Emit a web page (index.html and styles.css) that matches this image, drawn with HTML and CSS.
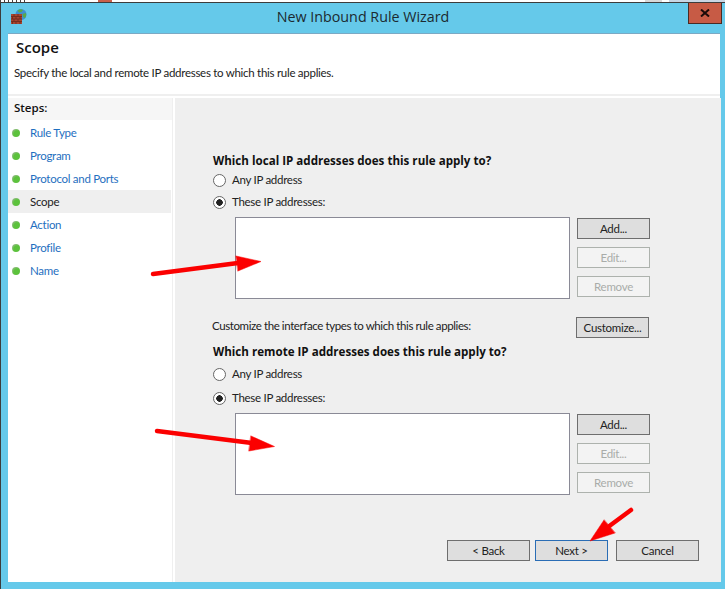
FILE: index.html
```html
<!DOCTYPE html>
<html lang="en">
<head>
<meta charset="utf-8">
<title>New Inbound Rule Wizard</title>
<link rel="stylesheet" href="styles.css">
</head>
<body>
<div class="strip"><span class="strip-text"></span><span class="strip-red"></span><span class="strip-grey"></span><span class="strip-blue"></span></div>
<div class="window">
  <div class="titlebar">
    <svg class="appicon" width="16" height="15" viewBox="0 0 16 15">
      <circle cx="10" cy="5.500" r="5.500" fill="#3f8fd0"/>
      <path d="M6.500 1.500c2-1.500 4-1.500 5.500-.5l-1.500 2-2.500.5zM11.500 5l3.500-1c.5 2 0 4-1 5l-2-1z" fill="#58a94a"/>
      <rect x="0" y="5" width="11" height="10" fill="#a8452f"/>
      <path d="M0 7.500h11M0 10h11M0 12.500h11M3 5v2.500M7 5v2.500M1.500 7.500V10M5 7.500V10M9 7.500V10M3 10v2.500M7 10v2.500M1.500 12.500V15M5 12.500V15M9 12.500V15" stroke="#6d2a1c" stroke-width=".8" fill="none"/>
    </svg>
    <div class="title">New Inbound Rule Wizard</div>
    <div class="close"><svg width="10" height="8" viewBox="0 0 10 8"><path d="M1 0.500L9 7.500M9 0.500L1 7.500" stroke="#1a0a08" stroke-width="2"/></svg></div>
  </div>
  <div class="content">
    <header class="head">
      <h1>Scope</h1>
      <p>Specify the local and remote IP addresses to which this rule applies.</p>
    </header>
    <div class="body">
      <nav class="side">
        <div class="steps-title">Steps:</div>
        <ul class="steps">
          <li class="step"><i class="dot"></i>Rule Type</li>
          <li class="step"><i class="dot"></i>Program</li>
          <li class="step"><i class="dot"></i>Protocol and Ports</li>
          <li class="step current"><i class="dot"></i>Scope</li>
          <li class="step"><i class="dot"></i>Action</li>
          <li class="step"><i class="dot"></i>Profile</li>
          <li class="step"><i class="dot"></i>Name</li>
        </ul>
      </nav>
      <main class="main">
        <section class="group first">
          <h2>Which local IP addresses does this rule apply to?</h2>
          <div class="radio r1"><i class="rb"></i>Any IP address</div>
          <div class="radio r2"><i class="rb on"></i>These IP addresses:</div>
          <div class="listrow">
            <div class="list"></div>
            <div class="btns">
              <div class="btn">Add...</div>
              <div class="btn off">Edit...</div>
              <div class="btn off">Remove</div>
            </div>
          </div>
        </section>
        <div class="custom">
          <span class="custom-label">Customize the interface types to which this rule applies:</span>
          <div class="btn">Customize...</div>
        </div>
        <section class="group second">
          <h2>Which remote IP addresses does this rule apply to?</h2>
          <div class="radio r1"><i class="rb"></i>Any IP address</div>
          <div class="radio r2"><i class="rb on"></i>These IP addresses:</div>
          <div class="listrow">
            <div class="list"></div>
            <div class="btns">
              <div class="btn">Add...</div>
              <div class="btn off">Edit...</div>
              <div class="btn off">Remove</div>
            </div>
          </div>
        </section>
        <footer class="foot">
          <div class="btn wide">&lt; Back</div>
          <div class="btn next">Next &gt;</div>
          <div class="btn wide">Cancel</div>
        </footer>
      </main>
    </div>
  </div>
</div>
<svg class="arrows" width="725" height="589" viewBox="0 0 725 589">
  <g fill="#fb0000" stroke="#fb0000" stroke-linecap="round">
    <path d="M153 274L238 263" stroke-width="4.500" fill="none"/>
    <path d="M236 256L261 261.500L238 271Z" stroke-width=".5"/>
    <path d="M157 431L252 443" stroke-width="4.500" fill="none"/>
    <path d="M251 436L274.500 446.500L249 451Z" stroke-width=".5"/>
    <path d="M631 510L608 527" stroke-width="4.500" fill="none"/>
    <path d="M604 520L590 541L615 533Z" stroke-width=".5"/>
  </g>
</svg>
</body>
</html>
```

FILE: styles.css
```css
* { box-sizing: border-box; }
html, body { margin: 0; padding: 0; }
body {
  width: 725px;
  height: 589px;
  overflow: hidden;
  position: relative;
  background: #65c9ea;
  font-family: Lato, Roboto, sans-serif;
  font-size: 11.500px;
  letter-spacing: -0.28px;
  color: #222;
}
.strip {
  height: 2px;
  background: #fff;
  display: flex;
}
.strip-text {
  width: 26px;
  margin-right: 72px;
  background: repeating-linear-gradient(90deg, #444 0 1px, #fff 1px 4px);
}
.strip-red { width: 14px; background: #c9604c; margin-right: 533px; }
.strip-grey { width: 17px; background: #d8d8d8; margin-right: 7px; }
.strip-blue { width: 56px; background: #c9d6e4; }
.window {
  height: 587px;
  border-top: 1px solid #3c3c3c;
  border-left: 1px solid #3c3c3c;
  display: flex;
  flex-direction: column;
}
.titlebar {
  height: 30px;
  flex: none;
  display: grid;
  grid-template-columns: 1fr auto 1fr;
  align-items: start;
  padding-left: 10px;
  padding-right: 3px;
}
.appicon { margin-top: 6px; }
.title {
  font-family: "Open Sans", sans-serif;
  font-size: 14.300px;
  letter-spacing: normal;
  line-height: 28px;
  color: #1c2a30;
  margin-right: 7px;
}
.close {
  justify-self: end;
  width: 34px;
  height: 21px;
  background: #c75b45;
  border: 1px solid #4a2a22;
  border-top: 0;
  display: flex;
  align-items: center;
  justify-content: center;
}
.content {
  flex: 1;
  margin: 0 5px 7px 7px;
  display: flex;
  flex-direction: column;
  background: #fff;
  border-top: 1px solid #7ba9c4;
}
.head {
  flex: none;
  padding-left: 6px;
  border-bottom: 2px solid #efefef;
  height: 62px;
}
h1 {
  margin: 0;
  padding: 3px 0 0 2px;
  font-family: "Open Sans", sans-serif;
  font-size: 15px;
  letter-spacing: normal;
  font-weight: 600;
  line-height: 20px;
  color: #111;
}
.head p {
  margin: 0;
  padding-top: 7px;
  line-height: 18px;
}
.body {
  flex: 1;
  display: flex;
  padding-top: 2px;
  min-height: 0;
  background: #fff;
}
.side {
  width: 165px;
  margin-right: 2px;
  flex: none;
  border-right: 1px solid #efefef;
}
.steps-title {
  height: 22px;
  padding-left: 6px;
  line-height: 20px;
  font-family: "Open Sans", sans-serif;
  font-weight: 600;
  letter-spacing: normal;
  color: #111;
  background: #f6f6f6;
}
.steps {
  list-style: none;
  margin: 1px 0 0;
  padding: 0;
}
.step {
  height: 23px;
  padding-left: 4px;
  display: flex;
  align-items: center;
  line-height: 23px;
  color: #1f6fc0;
}
.step.current { background: #efefef; color: #222; margin-right: 1px; }
.dot {
  width: 8px;
  height: 8px;
  margin-right: 10px;
  border-radius: 50%;
  background: radial-gradient(circle at 65% 65%, #5cc23c 45%, #a8b8a0 90%);
}
.main {
  flex: 1;
  background: #efefef;
  padding: 0 71px 21px 37px;
  display: flex;
  flex-direction: column;
}
.group.first { margin-top: 54px; }
h2 {
  margin: 0;
  padding-left: 1px;
  font-family: "Open Sans", sans-serif;
  font-size: 11.600px;
  letter-spacing: normal;
  font-weight: 700;
  line-height: 18px;
  color: #111;
}
.radio {
  display: flex;
  align-items: center;
  height: 18px;
  padding-left: 1px;
  line-height: 18px;
}
.r1 { margin-top: 1px; }
.r2 { margin-top: 4px; }
.second .r1 { margin-top: 4px; }
.second .r2 { margin-top: 6px; }
.rb {
  width: 13px;
  height: 13px;
  margin-right: 6px;
  border: 1px solid #666;
  border-radius: 50%;
  background: #fff;
}
.rb.on { background: radial-gradient(circle, #222 0 3px, #fff 3.500px); }
.listrow {
  display: flex;
  gap: 7px;
  margin-top: 6px;
  padding-left: 23px;
}
.list {
  width: 335px;
  height: 82px;
  background: #fff;
  border: 1px solid #8a8a96;
}
.btns {
  display: flex;
  flex-direction: column;
  gap: 8px;
  padding-top: 1px;
}
.btn {
  width: 73px;
  height: 21px;
  background: #dedede;
  border: 1px solid #6e6e6e;
  text-align: center;
  line-height: 20px;
  color: #222;
}
.btn.off { background: #f3f3f3; border-color: #adb2ad; color: #a9aca9; }
.custom {
  display: flex;
  justify-content: space-between;
  align-items: center;
  margin-top: 18px;
  width: 437px;
  height: 21px;
}
.custom-label { margin-bottom: 4px; letter-spacing: -0.4px; }
.second { margin-top: 5px; }
.foot {
  margin-top: auto;
  display: flex;
  justify-content: flex-end;
  margin-right: -49px;
  gap: 5px;
}
.btn.wide { width: 83px; }
.btn.next { width: 73px; border-color: #2a6db5; margin-right: 3px; }
.arrows {
  position: absolute;
  left: 0;
  top: 0;
  pointer-events: none;
}
```
